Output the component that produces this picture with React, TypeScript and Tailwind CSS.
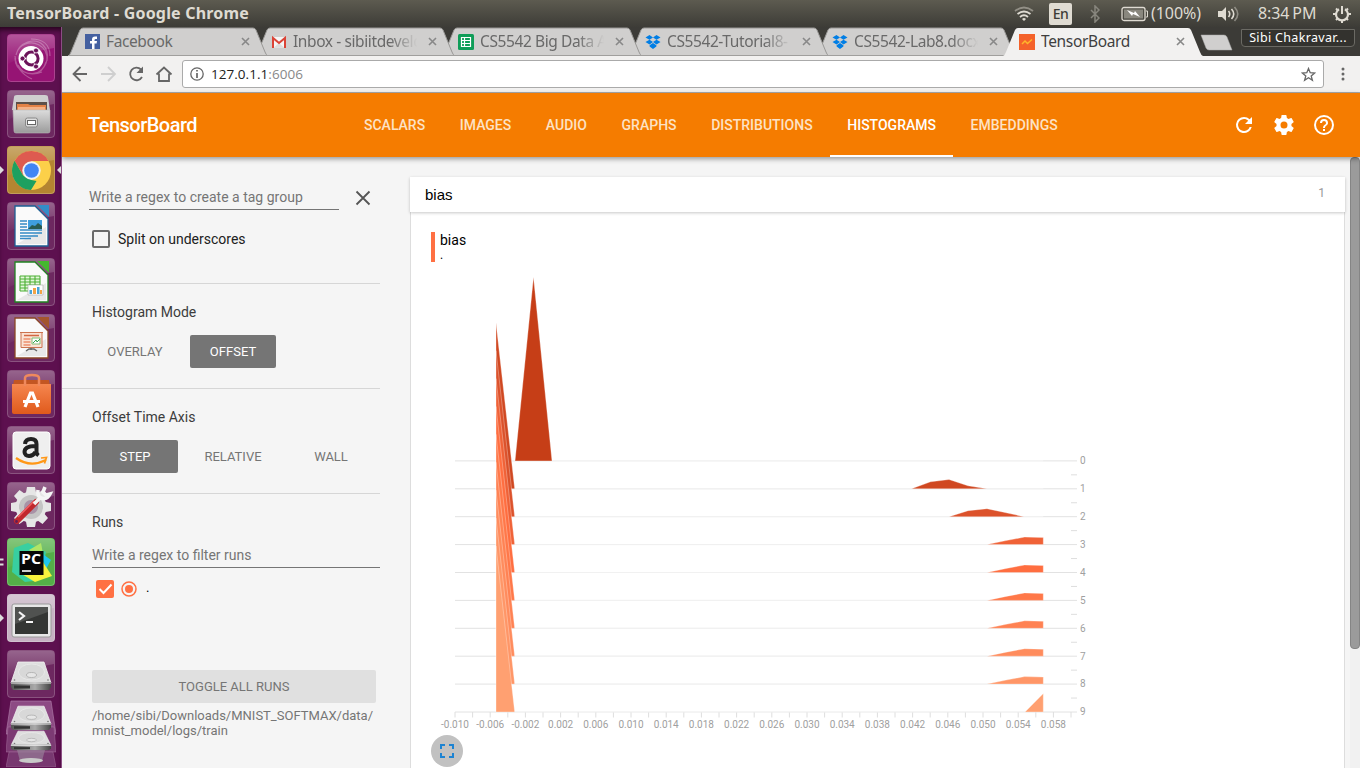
import React from "react";

const ubuntu = "font-['Noto_Sans','Open_Sans',sans-serif]";

/* ---------- desktop launcher ---------- */

function Tile({ bg = "#ffffff", opacity = 0.1, children }: { bg?: string; opacity?: number; children: React.ReactNode }) {
  return (
    <svg width="48" height="48" viewBox="0 0 48 48" className="block shrink-0">
      <rect width="48" height="48" rx="4" fill={bg} fillOpacity={opacity} />
      <path d="M1 4a3 3 0 0 1 3-3h40a3 3 0 0 1 3 3v10Q24 17 1 30z" fill="url(#gloss)" />
      <rect x=".5" y=".5" width="47" height="47" rx="3.5" fill="none" stroke="#fff" strokeOpacity=".2" />
      {children}
    </svg>
  );
}

function Page({ edge, fold, children }: { edge: string; fold: string; children: React.ReactNode }) {
  return (
    <g>
      <path d="M8 4h20l13 13v27H8z" fill="#fafafa" stroke={edge} strokeWidth="1.300" />
      <path d="M30 3h12v12z" fill={fold} />
      <path d="M10 42h29V25z" fill="#dcdcdc" opacity=".6" />
      {children}
    </g>
  );
}

function Drive() {
  return (
    <g>
      <path d="m11 12 26 0 7 21H4z" fill="#dedede" stroke="#f3f3f3" strokeWidth=".8" />
      <ellipse cx="24.500" cy="22" rx="13" ry="8" fill="#d8d8d8" stroke="#e8e8e8" />
      <ellipse cx="24.500" cy="25" rx="5" ry="2.500" fill="#e6e6e6" stroke="#aaa" strokeWidth=".8" />
      <path d="M4 32h40v5l-2 3H6l-2-3z" fill="url(#metal)" />
      <path d="M4 33h40" stroke="#eee" />
      <path d="M7 37h16" stroke="#333" strokeWidth="3" />
      <circle cx="7.500" cy="30" r=".8" fill="#777" />
      <circle cx="41" cy="30" r=".8" fill="#777" />
    </g>
  );
}

function Launcher() {
  return (
    <aside className="relative flex w-[62px] shrink-0 flex-col items-start gap-2 overflow-hidden border-r border-[#8b4d83] bg-[#5d104f] pl-[7px] pt-[7px] shadow-[inset_0_5px_5px_-2px_#28051f]">
      <svg width="0" height="0" className="absolute">
        <defs>
          <linearGradient id="gloss" x1="0" y1="0" x2="0" y2="1">
            <stop offset="0" stopColor="#fff" stopOpacity=".28" />
            <stop offset="1" stopColor="#fff" stopOpacity=".02" />
          </linearGradient>
          <linearGradient id="metal">
            <stop offset="0" stopColor="#555" />
            <stop offset=".6" stopColor="#aaa" />
            <stop offset="1" stopColor="#444" />
          </linearGradient>
          <linearGradient id="steel" x1="0" y1="0" x2="0" y2="1">
            <stop offset="0" stopColor="#dcdcdc" />
            <stop offset="1" stopColor="#9b9b9b" />
          </linearGradient>
          <linearGradient id="bag" x1="0" y1="0" x2="0" y2="1">
            <stop offset="0" stopColor="#f5864f" />
            <stop offset="1" stopColor="#e05a1c" />
          </linearGradient>
        </defs>
      </svg>
      <Tile bg="#d61a9c" opacity={0.48}>
        <g fill="none" stroke="#fff" strokeOpacity=".28" strokeWidth="1.200">
          <path d="M9 21C12 8 28 3 36 11s4 21-3 26M12 14C25 3 42 12 40 27M39 28C35 43 17 43 11 31M35 38c-13 5-27-1-27-14M8 22C9 34 16 41 25 45M24 5c11 0 19 5 19 17" />
        </g>
        <circle cx="24" cy="24.500" r="12.500" fill="#fff" />
        <circle cx="24.500" cy="24.500" r="6.600" fill="none" stroke="#6b1359" strokeWidth="3" />
        <path d="M19 24.500h-5M27 19.500l3-5M27 29.500l3 5" stroke="#fff" strokeWidth="1.400" />
        <g fill="#6b1359" stroke="#fff" strokeWidth=".8"><circle cx="15.500" cy="24.500" r="2.500" /><circle cx="29" cy="16.500" r="2.500" /><circle cx="29" cy="32.500" r="2.500" /></g>
      </Tile>
      <Tile>
        <path d="M7 7q0-2 3-2h28q3 0 3 2l2 13H5z" fill="#cfcfcf" />
        <path d="M9 12h31v9H9z" fill="#5c5049" />
        <path d="M10 14h11l2 1h16v6H10z" fill="#e38246" /><path d="M11 17h27v4H11z" fill="#f4b287" />
        <path d="M6 20h37v21q0 2-2 2H9q-2 0-2-2z" fill="url(#steel)" stroke="#bbb" strokeWidth=".6" />
        <rect x="18.500" y="28" width="12" height="9" rx="2" fill="#ddd" stroke="#888" />
        <rect x="20.500" y="30.500" width="8" height="4" fill="#fff" stroke="#666" />
      </Tile>
      <Tile bg="#c39a2c" opacity={0.85}>
        <circle cx="24.500" cy="24.500" r="19.500" fill="#fcd049" />
        <path d="M24.500 15h17A19.500 19.500 0 0 0 7.600 14.800l8.500 14.500 8.400-5z" fill="#de5b50" />
        <path d="m7.600 14.800 8.500 14.600 8.400 4.500 5 1-5.500 9.100A19.500 19.500 0 0 1 7.600 14.800z" fill="#1da060" />
        <circle cx="24.500" cy="24.500" r="9.200" fill="#f3f3f3" /><circle cx="24.500" cy="24.500" r="7.300" fill="#4285f4" />
      </Tile>
      <Tile>
        <Page edge="#1d5f94" fold="#328cc8">
          <path d="M13 19h7M13 22h7M13 25h7M13 28h22M13 31h22M13 34h18M13 36.500h11" stroke="#358bc5" strokeWidth="1.300" />
          <path d="M21 18h14v9H21z" fill="#3f9ede" /><path d="m21 27 4-4 3 1 3-3 4 3v3z" fill="#285b52" />
        </Page>
      </Tile>
      <Tile>
        <Page edge="#218322" fold="#45b82f">
          <path d="M13 18h20v15H13z" fill="#e5f7dc" />
          <path d="M13 18h20M13 21h20M13 24h20M13 27h20M13 30h12M13 33h12M13 18v15M18 18v15M23 18v15M28 18v9M33 18v9" stroke="#4caf35" strokeWidth="1.100" />
          <path d="M21 27h15v10H21z" fill="#fff" stroke="#aaa" strokeWidth=".6" />
          <path d="M22.500 32h2.500v4h-2.500zM30 29h2.500v7H30z" fill="#48a4d8" /><path d="M26 30h3v6h-3zM33 32h2v4h-2z" fill="#f3a445" />
        </Page>
      </Tile>
      <Tile>
        <Page edge="#8c4726" fold="#a3552d">
          <path d="M14 18.500h21v15H14zM13 18.500h23" fill="#fae3d5" stroke="#cc744f" />
          <path d="M17 21.500h15" stroke="#d36843" strokeWidth="1.500" />
          <path d="M16.500 25h7M16.500 28h7M16.500 31h7" stroke="#ed906d" strokeWidth="1.700" />
          <path d="M25 24h8v6h-8z" fill="#fff" stroke="#81bc73" /><path d="m26 29 3-3 1 2 3-3" fill="none" stroke="#37a650" />
          <path d="M24 34v2m-5 1 3-2h5l3 2" fill="none" stroke="#666" strokeWidth="1.500" />
        </Page>
      </Tile>
      <Tile>
        <path d="M7 10h35l1 6H6z" fill="#c35622" />
        <path d="M5 14h39v28q0 2-2 2H7q-2 0-2-2z" fill="url(#bag)" />
        <path d="M18 16V8q0-3 7-3t7 3v8" fill="none" stroke="#ef895d" strokeWidth="2.500" />
        <path d="m18 37 5.500-14h2L31 37M16 31.500h17" fill="none" stroke="#fff" strokeWidth="3.200" />
      </Tile>
      <Tile>
        <rect x="6" y="6" width="37" height="37" rx="3" fill="#efefef" stroke="#fff" />
        <path d="M18 18q.5-5 6-5 5.500 0 5.500 5v8q0 2 2 3.500M28.500 20c-7 0-11 1.500-11 6 0 5 8 5.500 11 0" fill="none" stroke="#222" strokeWidth="4" />
        <path d="M9 32q14 10 30 2" fill="none" stroke="#ff9818" strokeWidth="2.300" /><path d="m34 32 5.500-.5-2 6" fill="none" stroke="#ff9818" strokeWidth="1.700" />
      </Tile>
      <Tile>
        <g fill="#e6e6e6">
          <circle cx="24" cy="25" r="15.500" />
          <path d="M20 5h8l1.500 8h-11zM20 45h8l1.500-8h-11zM4 21v8l8 1.500v-11zM44 21v8l-8 1.500v-11z" />
          <path d="m7 14 5.500-6 7 5-7 7.500zM41 14l-5.500-6-7 5 7 7.500zM7 36l5.500 6 7-5-7-7.500zM41 36l-5.500 6-7-5 7-7.500z" />
        </g>
        <circle cx="24" cy="25" r="12" fill="#c4c4c4" /><circle cx="24" cy="25" r="7" fill="#a892a6" />
        <path d="M10 39 29 20" stroke="#c1282e" strokeWidth="6" strokeLinecap="round" />
        <path d="m11 35 16-16" stroke="#ef6063" strokeWidth="1.600" />
        <path d="m27 22 6-6M31 8q-1 6 3 8 6 2 9-4l-4 1-3-3 2-5" fill="none" stroke="#f5f5f5" strokeWidth="3.600" />
        <circle cx="9.500" cy="39.500" r="1.400" fill="#611d57" />
      </Tile>
      <Tile bg="#53b848" opacity={0.95}>
        <path d="m7 10 14-5 18 9-5 28-16 2L5 34z" fill="#38cfa0" />
        <path d="m22 12 12-7 3 16z" fill="#afe566" /><path d="m33 14 11 8-5 9z" fill="#20c8ee" />
        <path d="m34 21 11 17-17 6-15-9z" fill="#f8f23d" />
        <rect x="12.500" y="13" width="24" height="24" fill="#080808" />
        <text x="14" y="25.500" fill="#fff" fontFamily="Open Sans, sans-serif" fontSize="14" fontWeight="700" textLength="20" lengthAdjust="spacingAndGlyphs">PC</text>
        <path d="M15 33h9" stroke="#fff" strokeWidth="1.600" />
      </Tile>
      <Tile bg="#cfc0cd" opacity={0.92}>
        <rect x="5" y="10" width="39" height="33" rx="2" fill="#e7e7e7" stroke="#999" />
        <rect x="8" y="13" width="33" height="27" fill="#343634" />
        <path d="M8 13h33v5L8 30z" fill="#505250" />
        <path d="m12 18 5 4-5 4M19 28h7" stroke="#f5f5f5" strokeWidth="2.200" fill="none" />
      </Tile>
      <Tile><Drive /></Tile>
      <svg width="50" height="67" viewBox="0 0 50 67" className="-ml-px -mt-[6px] block shrink-0">
        <path d="M5 1h40l5 33H0z" fill="#8d4b84" stroke="#b382ad" strokeOpacity=".6" />
        <path d="M2 27h46l2 25H0z" fill="#7c3a73" stroke="#b382ad" strokeOpacity=".4" />
        <g transform="translate(1,-4) scale(1,.85)"><Drive /></g>
        <path d="M3 52h44l3 15H0z" fill="#783870" stroke="#a36e9b" strokeOpacity=".5" />
        <g transform="translate(1,23) scale(1,.68)"><Drive /></g>
        <path d="M11 50h28l-3 11H14z" fill="#98839a" opacity=".65" /><ellipse cx="25" cy="60.500" rx="12" ry="2.500" fill="#c9c9c9" />
      </svg>
      <svg width="62" height="741" viewBox="0 0 62 741" className="absolute left-0 top-0">
        <path d="M0 139l4 4-4 4zM61 139l-4 4 4 4zM0 587l4 4-4 4z" fill="#ddd" />
        <path d="M0 532.500h3.500M0 537.500h3.500" stroke="#ddd" strokeWidth="2" />
      </svg>
    </aside>
  );
}

/* ---------- system bar ---------- */

function SystemBar() {
  return (
    <header className={`flex h-[27px] shrink-0 items-center justify-between bg-linear-to-b from-[#5d5b50] to-[#3d3c37] pl-[7px] pr-[9px] text-[#dfdbd2] ${ubuntu}`}>
      <div className="-mt-[2px] text-[16px] font-bold leading-[24px] tracking-[0.2px]">TensorBoard - Google Chrome</div>
      <div className="flex h-full items-center">
        <svg width="20" height="16" viewBox="0 0 20 16" fill="none" stroke="#dfdbd2" strokeWidth="1.800">
          <path d="M1 5q9-7 18 0" opacity=".45" /><path d="M3.500 8q6.500-5 13 0M6 11q4-3.500 8 0" /><path d="m8 13 2 2 2-2q-2-2-4 0" fill="#dfdbd2" stroke="none" />
        </svg>
        <span className="ml-[15px] flex h-[22px] w-[23px] items-center justify-center rounded-[2px] bg-[#dfdbd2] text-[14px] font-medium tracking-[-0.5px] text-[#3c3b37]">En</span>
        <svg width="10" height="18" viewBox="0 0 10 18" className="ml-[18px]" fill="none" stroke="#88867e" strokeWidth="1.500"><path d="m1 5 8 8-4 4V1l4 4-8 8" /></svg>
        <svg width="28" height="16" viewBox="0 0 28 16" className="ml-[21px]">
          <rect x="1" y="1.500" width="23" height="13" rx="2" fill="none" stroke="#dfdbd2" strokeWidth="1.300" /><rect x="3" y="3.500" width="19" height="9" fill="#89877e" />
          <path d="M25 5h1.500v6H25" fill="none" stroke="#dfdbd2" /><path d="m6 4 7 3 1-2 5 6-7-3-1 2z" fill="#fff" />
        </svg>
        <span className="-mt-[2px] ml-[2px] w-[54px] whitespace-nowrap text-[16px] leading-[24px] tracking-[-0.05px]">(100%)</span>
        <svg width="22" height="18" viewBox="0 0 22 18" className="ml-[13px]" fill="none" stroke="#dfdbd2" strokeWidth="1.600">
          <path d="M0 6h4l4-4v14l-4-4H0z" fill="#dfdbd2" stroke="none" /><path d="M10.500 6q2.500 3 0 6M13.500 4q4.500 5 0 10" /><path d="M16.500 2q6.500 7 0 14" opacity=".45" />
        </svg>
        <span className="-mt-[2px] ml-[18px] w-[61px] whitespace-nowrap text-[16px] leading-[24px] tracking-[-0.1px]">8:34<span className="ml-[3px]">PM</span></span>
        <svg width="18" height="18" viewBox="0 0 18 18" className="ml-[14px]" fill="none" stroke="#dfdbd2">
          <path d="M6 4.200a6 6 0 1 0 6 0" strokeWidth="2.200" /><path d="M9 1v8" strokeWidth="2" />
          <path d="m3 3.500 1.500 1.500M15 3.500 13.500 5M0 9h3M15 9h3M3 15l2-2M15 15l-2-2M9 15v3" strokeWidth="2" />
        </svg>
      </div>
    </header>
  );
}

/* ---------- browser frame ---------- */

const Dropbox = () => (
  <svg width="16" height="16" viewBox="0 0 16 16" fill="#007ee5"><path d="m4.500 1 3.500 2.400-3.500 2.300L.5 3.400zM11.500 1l4 2.400-4 2.300L8 3.400zM.5 8l4-2.300L8 8l-3.500 2.400zM15.500 8l-4-2.300L8 8l3.500 2.400zM4.600 11.200 8 9l3.400 2.200v1.200L8 15l-3.400-2.600z" /></svg>
);

const tabs = [
  { name: "Facebook", icon: <svg width="15" height="15" viewBox="0 0 15 15"><path d="M0 0h15v15H0z" fill="#4460a0" /><path d="M7 15V9.500H5V7h2V5.500Q7 2.500 10 2.500h2V5h-1.300q-1.200 0-1.200 1.200V7H12l-.4 2.500H9.500V15z" fill="#fff" /></svg> },
  { name: "Inbox - sibiitdevelo", icon: <svg width="16" height="14" viewBox="0 0 16 14"><path d="M1 2h14v10.500H1z" fill="#f5f5f5" /><path d="M3 12.500 8 8l5 4.500" fill="#ddd" /><path d="M2 13V3l6 5 6-5v10" fill="none" stroke="#db4437" strokeWidth="2" /></svg> },
  { name: "CS5542 Big Data A", icon: <svg width="16" height="16" viewBox="0 0 16 16"><rect width="16" height="16" rx="1.500" fill="#0f9d58" /><path d="M3.500 3.500h9v9h-9zM3.500 6.500h9M3.500 9.500h9M6.500 3.500v9" fill="none" stroke="#fff" strokeWidth="1.200" /></svg> },
  { name: "CS5542-Tutorial8-", icon: <Dropbox /> },
  { name: "CS5542-Lab8.docx", icon: <Dropbox /> },
  { name: "TensorBoard", icon: <svg width="16" height="16" viewBox="0 0 16 16"><path d="M0 0h16v16H0z" fill="#f4622b" /><path d="m3 10 3-3 2.500 2.500L13 5.500" fill="none" stroke="#ffb52b" strokeWidth="1.500" /></svg> },
];
const tabLayers = ["z-[5]", "z-[4]", "z-[3]", "z-[2]", "z-[1]", "z-[6]"];

function TabStrip() {
  return (
    <div className={`isolate flex h-[29px] bg-[#3c3b37] pl-[6px] ${ubuntu}`}>
      {tabs.map((t, i) => {
        const active = i === 5;
        return (
          <div key={t.name} className={`relative -mr-[14px] flex h-[29px] w-[201px] shrink-0 items-center pl-4 ${tabLayers[i]}`}>
            <svg width="201" height="29" viewBox="0 0 201 29" className="absolute left-0 top-0">
              <path d="M0 29Q2 28 3 25L12 3Q13 1 15 1H185Q187 1 188 3L197 25Q198 28 200 29z" fill={active ? "#f2f1f0" : "#d0cfce"} stroke={active ? "none" : "#999896"} strokeWidth="1" />
              {!active && <path d="M0 28.500h201" stroke="#a09f9d" />}
            </svg>
            <div className="relative flex w-4 justify-center">{t.icon}</div>
            <div className={`relative -mt-px ml-[6px] w-[134.500px] overflow-hidden whitespace-nowrap text-[15.5px] leading-[26px] ${active ? "tracking-[-0.35px] text-[#3f3f3f]" : "tracking-[-0.4px] text-[#696969]"} ${t.name.length > 12 ? "mask-[linear-gradient(to_right,black_72%,transparent_92%)]" : ""}`}>{t.name}</div>
            <svg width="9" height="9" viewBox="0 0 9 9" className="relative"><path d="m1 1 7 7M8 1 1 8" stroke="#888" strokeWidth="1.600" /></svg>
          </div>
        );
      })}
      <svg width="33" height="17" viewBox="0 0 33 17" className="ml-[10px] mt-[7px] shrink-0"><path d="M1 1h23q2 0 3 2l5 13H9q-2 0-3-2z" fill="#d0cfce" stroke="#aaa" strokeWidth=".5" /></svg>
      <div className="ml-[8px] mt-[2px] flex h-[18px] w-[114px] shrink-0 items-center justify-center whitespace-nowrap rounded-b-[4px] border border-[#6b6a64] bg-[#33322e] pt-px text-[12.500px] tracking-[0.33px] text-white">Sibi Chakravar...</div>
    </div>
  );
}

function Toolbar() {
  return (
    <div className="flex h-[37px] items-center border-b border-[#a9a9a9] bg-[#f2f1f0] pl-[10px] pr-[15px]">
      <svg width="104" height="18" viewBox="0 0 104 18" fill="none" stroke="#666" strokeWidth="1.800">
        <path d="M15 9H2M8.500 2 1.500 9l7 7" />
        <path d="M29 9h13M36 2l7 7-7 7" stroke="#cfcfcf" />
        <path d="M69 4.500A6.300 6.300 0 1 0 70 12" /><path d="M64.500 8H71V1.500z" fill="#666" stroke="none" />
        <path d="M84.500 9.500 92 2.500l7.500 7M87 8.500V16h10V8.500" />
      </svg>
      <div className="ml-[6px] flex h-7 flex-1 items-center rounded-[3px] border border-[#aaa] bg-white pl-[7px] pr-[7px]">
        <svg width="14" height="14" viewBox="0 0 14 14" fill="none" stroke="#666" strokeWidth="1.300"><circle cx="7" cy="7" r="6.200" /><path d="M7 6v5M7 3v1.600" strokeWidth="1.700" /></svg>
        <span className="ml-[7px] flex-1 font-['Open_Sans',sans-serif] text-[13.500px] leading-5 tracking-[0.04px] text-[#222]">127.0.1.1<span className="text-[#888]">:6006</span></span>
        <svg width="15" height="15" viewBox="0 0 15 15" fill="none" stroke="#666" strokeWidth="1.300"><path d="m7.500 1.500 1.700 4.200 4.500.3-3.500 2.900 1.200 4.400-3.900-2.500-3.900 2.500 1.200-4.400L1.300 6l4.500-.3z" /></svg>
      </div>
      <svg width="4" height="14" viewBox="0 0 4 14" fill="#666" className="ml-[17px]"><circle cx="2" cy="2" r="1.500" /><circle cx="2" cy="7" r="1.500" /><circle cx="2" cy="12" r="1.500" /></svg>
    </div>
  );
}

/* ---------- TensorBoard ---------- */

const sections = ["SCALARS", "IMAGES", "AUDIO", "GRAPHS", "DISTRIBUTIONS", "HISTOGRAMS", "EMBEDDINGS"];

function AppBar() {
  return (
    <div className="relative z-10 flex h-16 shrink-0 bg-[#f57c00] pl-[26px] pr-[24px] text-white shadow-[0_2px_5px_rgba(0,0,0,.38)]">
      <h1 className="w-[258.700px] text-[20px] font-medium leading-[64px] tracking-[-0.52px]">TensorBoard</h1>
      <nav className="flex flex-1 text-[14px] font-medium leading-[64px]">
        {sections.map((s) => (
          <a key={s} className={`h-16 px-[17.320px] ${s === "HISTOGRAMS" ? "border-b-2 border-white" : "text-[#fde2c5]"}`}>{s}</a>
        ))}
      </nav>
      <div className="flex items-center gap-4">
        <svg width="24" height="24" viewBox="0 0 24 24" fill="#fff"><path d="M17.650 6.350A7.960 7.960 0 0 0 12 4a8 8 0 1 0 7.730 10h-2.080A6 6 0 1 1 12 6c1.660 0 3.140.69 4.220 1.780L13 11h7V4z" /></svg>
        <svg width="24" height="24" viewBox="0 0 24 24" fill="#fff"><path d="M19.430 12.980c.04-.32.07-.64.07-.98s-.03-.66-.07-.98l2.110-1.650c.19-.15.24-.42.12-.64l-2-3.460c-.12-.22-.39-.3-.61-.22l-2.490 1c-.52-.4-1.080-.73-1.690-.98l-.38-2.650A.49.49 0 0 0 14 2h-4c-.25 0-.46.18-.49.420l-.38 2.650c-.61.25-1.170.59-1.690.98l-2.490-1c-.23-.09-.49 0-.61.22l-2 3.460c-.13.22-.07.49.12.640l2.110 1.650c-.04.32-.07.65-.07.98s.03.66.07.98l-2.110 1.650c-.19.15-.24.42-.12.640l2 3.460c.12.22.39.3.61.22l2.490-1c.52.4 1.080.73 1.690.98l.38 2.650c.03.24.24.42.49.420h4c.25 0 .46-.18.49-.420l.38-2.650c.61-.25 1.170-.59 1.690-.98l2.490 1c.23.09.49 0 .61-.22l2-3.460c.12-.22.07-.49-.12-.640zM12 15.500a3.500 3.500 0 1 1 0-7 3.500 3.500 0 0 1 0 7z" /></svg>
        <svg width="24" height="24" viewBox="0 0 24 24" fill="#fff"><path d="M11 18h2v-2h-2v2zm1-16a10 10 0 1 0 0 20 10 10 0 0 0 0-20zm0 18a8 8 0 1 1 0-16 8 8 0 0 1 0 16zm0-14a4 4 0 0 0-4 4h2a2 2 0 1 1 4 0c0 2-3 1.750-3 5h2c0-2.250 3-2.500 3-5a4 4 0 0 0-4-4z" /></svg>
      </div>
    </div>
  );
}

function ModeButton({ label, on }: { label: string; on?: boolean }) {
  return <button className={`h-[33px] w-[86px] rounded-[2px] text-[13px] ${on ? "bg-[#757575] text-white" : "text-[#757575]"}`}>{label}</button>;
}

function Sidebar() {
  return (
    <section className="flex w-[348px] shrink-0 flex-col bg-[#f5f5f5] text-[14px] text-[#3c3c3c]">
      <div className="mr-[30px] h-[127px] border-b border-[#d6d6d6] pl-[27px] pt-[27px]">
        <div className="flex">
          <div className="h-[26px] w-[250px] border-b border-[#757575] leading-[26px] text-[#757575]">Write a regex to create a tag group</div>
          <svg width="16" height="16" viewBox="0 0 16 16" className="ml-[16px] mt-[6px]"><path d="m1.500 1.500 13 13m0-13-13 13" stroke="#555" strokeWidth="1.800" /></svg>
        </div>
        <label className="mt-[20px] flex h-[18px] items-center pl-[3px] text-[#212121]"><span className="mr-2 h-[18px] w-[18px] rounded-[2px] border-2 border-[#6a6a6a]" />Split on underscores</label>
      </div>
      <div className="mr-[30px] h-[105px] border-b border-[#d6d6d6] pl-[30px] pt-[18px]">
        <h3 className="leading-5">Histogram Mode</h3>
        <div className="mt-[13px] flex gap-3"><ModeButton label="OVERLAY" /><ModeButton label="OFFSET" on /></div>
      </div>
      <div className="mr-[30px] h-[105px] border-b border-[#d6d6d6] pl-[30px] pt-[18px]">
        <h3 className="leading-5">Offset Time Axis</h3>
        <div className="mt-[13px] flex gap-3"><ModeButton label="STEP" on /><ModeButton label="RELATIVE" /><ModeButton label="WALL" /></div>
      </div>
      <div className="mr-[30px] pl-[30px] pt-[18px]">
        <h3 className="leading-5">Runs</h3>
        <div className="mt-[10px] h-[26px] border-b border-[#757575] leading-[26px] text-[#757575]">Write a regex to filter runs</div>
        <div className="mt-[12px] flex h-[18px] items-center pl-[4px]">
          <svg width="18" height="18" viewBox="0 0 18 18"><rect width="18" height="18" rx="2" fill="#ff7043" /><path d="m3.500 9 4 4 8-8.500" fill="none" stroke="#fff" strokeWidth="2" /></svg>
          <svg width="16" height="16" viewBox="0 0 16 16" className="ml-[7px]"><circle cx="8" cy="8" r="7" fill="none" stroke="#ff7043" strokeWidth="1.500" /><circle cx="8" cy="8" r="4" fill="#ff7043" /></svg>
          <span className="-mt-[3px] ml-[9px] text-[13px] text-black">.</span>
        </div>
        <button className="mt-[72px] block h-[33px] w-[284px] rounded-[2px] bg-[#e0e0e0] text-[13px] text-[#757575]">TOGGLE ALL RUNS</button>
        <p className="mt-[5px] text-[13px] leading-[15px] text-[#757575]">/home/sibi/Downloads/MNIST_SOFTMAX/data/<br />mnist_model/logs/train</p>
      </div>
    </section>
  );
}

const shades = ["#c63e17", "#d04821", "#dc522b", "#f06237", "#ff6e40", "#ff7849", "#ff8253", "#ff8c5d", "#ff9667", "#ffa071"];
const late = [[987, 0], [1006, 4], [1024.600, 7.500], [1043.300, 7]];
const tails = [
  [],
  [[911.500, 0], [930.500, 7], [949, 9.300], [968, 3], [987, 0], [1043, 0]],
  [[949, 0], [968, 6], [987, 8], [1005, 4.200], [1024, 0], [1043, 0]],
  late, late, late, late, late, late,
  [[1025, 0], [1043.300, 18.500]],
];

function HistogramChart() {
  const base = (i: number) => 248.9 + i * 27.9;
  return (
    <svg width="700" height="504" viewBox="0 20 700 504" className="block" fontFamily="Roboto, sans-serif" fontSize="10" fill="#a0a0a0">
      <g transform="translate(-411,0)">
        {shades.map((_, i) => (
          <g key={i}>
            <path d={`M455 ${base(i)}H1077`} stroke="#e2e2e2" />
            {i < 9 && <path d={`M1071 ${base(i) + 13.95}h6`} stroke="#dedede" />}
            <text x="1080" y={base(i) + 3.3}>{i}</text>
          </g>
        ))}
        {Array.from({ length: 36 }, (_, k) => (
          <g key={k}>
            <path d={`M${455 + k * 17.6} 500v5.500`} stroke="#dedede" />
            {k % 2 === 0 && <text x={455 + k * 17.6} y="515.500" textAnchor="middle">{(-0.01 + k * 0.002).toFixed(3)}</text>}
          </g>
        ))}
        {shades.map((c, i) => {
          const b = base(i);
          const points = i === 0
            ? [[496, 0], [515, 0], [533.5, 183.8], [552, 0], [1043, 0]]
            : [[496, 166], [514.7, 0], ...tails[i]];
          return <path key={i} d={`M496 ${b}` + points.map((p) => `L${p[0]} ${b - p[1]}`).join("") + `L1043.300 ${b}z`} fill={c} stroke="#fff" strokeOpacity=".45" strokeWidth=".7" />;
        })}
      </g>
    </svg>
  );
}

function Main() {
  return (
    <main className="flex min-w-0 flex-1 flex-col bg-[#f5f5f5] pr-[15px] pt-5">
      <div className="relative z-[1] flex h-[35px] shrink-0 items-center justify-between bg-white pl-[15px] pr-[20px] shadow-[0_1px_3px_rgba(0,0,0,.22)]">
        <h2 className="pt-px font-['Liberation_Sans',sans-serif] text-[15px] text-black">bias</h2>
        <span className="-mt-1 text-[12px] text-[#999]">1</span>
      </div>
      <div className="h-[556px] border-x border-[#ddd] bg-white">
        <div className="h-0 pl-5 pt-5">
          <div className="h-[30px] border-l-4 border-[#ff7043] pl-[5px] text-black">
            <div className="text-[14px] leading-4">bias</div><div className="text-[12px] leading-[14px]">.</div>
          </div>
        </div>
        <HistogramChart />
        <button className="relative z-[1] ml-5 -mt-px flex h-8 w-8 items-center justify-center rounded-full bg-[#c1c1c1]">
          <svg width="14" height="14" viewBox="0 0 14 14" fill="none" stroke="#1c83d2" strokeWidth="2"><path d="M1 5V1h4M9 1h4v4M13 9v4H9M5 13H1V9" /></svg>
        </button>
      </div>
    </main>
  );
}

export default function App() {
  return (
    <div className="flex h-[768px] w-[1360px] flex-col overflow-hidden">
      <SystemBar />
      <div className="flex min-h-0 flex-1">
        <Launcher />
        <div className="flex min-w-0 flex-1 flex-col">
          <TabStrip />
          <Toolbar />
          <div className="flex min-h-0 flex-1 flex-col font-['Roboto',sans-serif]">
            <AppBar />
            <div className="relative flex min-h-0 flex-1">
              <Sidebar />
              <Main />
              <div className="absolute right-0 top-0 h-full w-[10px] bg-[#f1f1f1]"><div className="h-[492px] rounded-[4px] border border-[#858585] bg-[#9b9b9b]" /></div>
            </div>
          </div>
        </div>
      </div>
    </div>
  );
}
